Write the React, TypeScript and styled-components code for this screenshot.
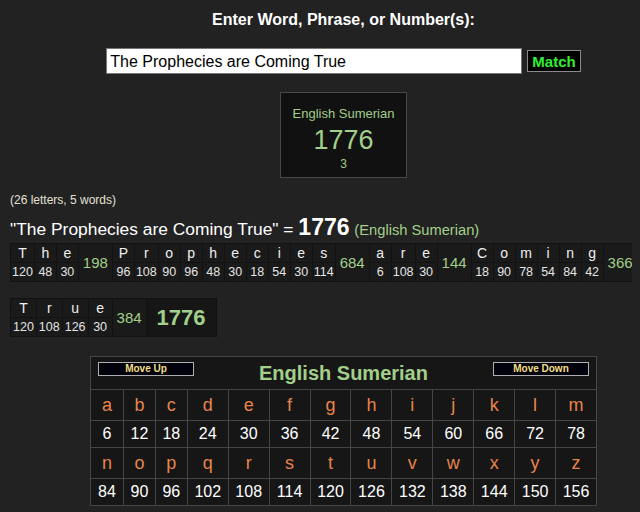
import React from 'react';
import styled, { createGlobalStyle } from 'styled-components';

const GlobalStyle = createGlobalStyle`
html, body {
    margin: 0;
    padding: 0;
    background-color: #222222;
    overflow: hidden;
}
body {
    margin: 8px;
    font-family: "Liberation Sans", Arial, sans-serif;
    color: #eeeeee;
}
`;

const GREEN = '#a2cf8a';

const Page = styled.div`
width: 671px;
display: flex;
flex-direction: column;
`;

const Title = styled.div`
height: 24px;
line-height: 24px;
text-align: center;
font-weight: bold;
font-size: 16px;
color: #ffffff;
`;

const InputRow = styled.div`
margin-top: 16px;
display: flex;
justify-content: center;
align-items: center;
gap: 5px;
`;

const PhraseInput = styled.input`
width: 416px;
height: 26px;
box-sizing: border-box;
border: 1px solid #767676;
background-color: #ffffff;
color: #000000;
font-family: "Liberation Sans", Arial, sans-serif;
font-size: 16px;
padding: 2px 3px 0 3px;
outline: none;
`;

const MatchButton = styled.button`
height: 22px;
box-sizing: border-box;
background-color: #000000;
border: 1px solid #8a8a8a;
color: #33ee33;
font-family: "Liberation Sans", Arial, sans-serif;
font-weight: bold;
font-size: 15px;
padding: 0 4px;
cursor: pointer;
`;

const ScoreBox = styled.div`
margin: 18px auto 0 auto;
width: 127px;
height: 86px;
box-sizing: border-box;
background-color: #111111;
border: 1px solid #484848;
display: flex;
flex-direction: column;
align-items: center;
padding-top: 13px;
color: ${GREEN};
`;

const ScoreName = styled.div`
font-size: 13px;
line-height: 16px;
`;

const ScoreValue = styled.div`
font-size: 27px;
line-height: 30px;
margin-top: 3px;
`;

const ScoreRank = styled.div`
font-size: 12px;
line-height: 15px;
margin-top: 2px;
`;

const Counts = styled.div`
margin-top: 15px;
padding-left: 2px;
font-size: 12px;
line-height: 14px;
color: #e2e0d4;
`;

const Heading = styled.div`
margin-top: 9px;
padding-left: 2px;
height: 22px;
line-height: 22px;
font-size: 17.4px;
color: #ffffff;
white-space: nowrap;
`;

const HeadingTotal = styled.span`
font-weight: bold;
font-size: 23px;
`;

const HeadingCipher = styled.span`
font-size: 14.7px;
color: ${GREEN};
`;

const Breakdown = styled.div<{ $top: number }>`
margin-top: ${props => props.$top}px;
margin-left: 2px;
align-self: flex-start;
display: grid;
grid-template-rows: 18px 18px;
grid-auto-flow: column;
gap: 1px;
padding: 1px;
background-color: #121212;
`;

const LetterCell = styled.div<{ $pad: number }>`
min-width: 19px;
background-color: #1a1a1a;
color: #f0f0f0;
font-size: 14px;
display: flex;
align-items: center;
justify-content: center;
padding: 0 ${props => props.$pad}px;
`;

const NumberCell = styled(LetterCell)`
color: #e4e4e4;
font-size: 12.5px;
`;

const SumCell = styled.div`
grid-row: span 2;
background-color: #1a1a1a;
color: ${GREEN};
font-size: 15px;
display: flex;
align-items: center;
justify-content: center;
padding: 0 4px;
`;

const TotalCell = styled(SumCell)`
background-color: #161616;
font-size: 22px;
font-weight: bold;
padding: 0 10px;
`;

const Cipher = styled.div`
margin: 19px auto 0 auto;
width: 507px;
box-sizing: border-box;
border: 1px solid #454545;
background-color: #161616;
display: grid;
grid-template-columns: repeat(3, 32fr) repeat(10, 41fr);
`;

const CipherHeader = styled.div`
grid-column: 1 / -1;
height: 32px;
box-sizing: border-box;
display: flex;
align-items: flex-start;
justify-content: space-between;
padding: 5px 7px 0 7px;
position: relative;
`;

const CipherTitle = styled.div`
position: absolute;
left: 0;
right: 0;
top: 5px;
text-align: center;
font-size: 20px;
font-weight: bold;
color: ${GREEN};
pointer-events: none;
`;

const MoveButton = styled.button`
width: 96px;
height: 14px;
box-sizing: border-box;
background-color: #02020c;
border: 1px solid #b0b0b0;
color: #f3df86;
font-family: "Liberation Sans", Arial, sans-serif;
font-weight: bold;
font-size: 10px;
line-height: 12px;
padding: 0;
cursor: pointer;
`;

const CipherCell = styled.div<{ $letter?: boolean }>`
height: ${props => props.$letter ? 31 : 27}px;
box-sizing: border-box;
border-top: 1px solid #454545;
border-left: 1px solid #454545;
display: flex;
align-items: center;
justify-content: center;
font-size: ${props => props.$letter ? 18 : 16}px;
color: ${props => props.$letter ? '#e8844c' : '#ffffff'};
&:nth-child(13n + 2) {
    border-left: none;
}
`;

const phrase = 'The Prophecies are Coming True';
const value = (ch: string) => (ch.toLowerCase().charCodeAt(0) - 96) * 6;
const words = phrase.split(' ');
const alphabet = 'abcdefghijklmnopqrstuvwxyz'.split('');

function WordCells({ word, pad }: { word: string, pad: number }) {
    const sum = word.split('').reduce((acc, ch) => acc + value(ch), 0);
    return (
        <>
            {word.split('').map((ch, i) => (
                <React.Fragment key={i}>
                    <LetterCell $pad={pad}>{ch}</LetterCell>
                    <NumberCell $pad={pad}>{value(ch)}</NumberCell>
                </React.Fragment>
            ))}
            <SumCell>{sum}</SumCell>
        </>
    );
}

export default function App() {
    const total = words.reduce((acc, w) => acc + w.split('').reduce((a, ch) => a + value(ch), 0), 0);
    const rows = [alphabet.slice(0, 13), alphabet.slice(13)];

    return (
        <Page>
            <GlobalStyle />
            <Title>Enter Word, Phrase, or Number(s):</Title>
            <InputRow>
                <PhraseInput defaultValue={phrase} />
                <MatchButton>Match</MatchButton>
            </InputRow>
            <ScoreBox>
                <ScoreName>English Sumerian</ScoreName>
                <ScoreValue>{total}</ScoreValue>
                <ScoreRank>3</ScoreRank>
            </ScoreBox>
            <Counts>(26 letters, 5 words)</Counts>
            <Heading>
                "{phrase}" = <HeadingTotal>{total}</HeadingTotal> <HeadingCipher>(English Sumerian)</HeadingCipher>
            </Heading>
            <Breakdown $top={5}>
                {words.slice(0, 4).map((w, i) => <WordCells key={i} word={w} pad={1} />)}
            </Breakdown>
            <Breakdown $top={16}>
                <WordCells word={words[4]} pad={2} />
                <TotalCell>{total}</TotalCell>
            </Breakdown>
            <Cipher>
                <CipherHeader>
                    <MoveButton>Move Up</MoveButton>
                    <CipherTitle>English Sumerian</CipherTitle>
                    <MoveButton>Move Down</MoveButton>
                </CipherHeader>
                {rows.map((row, r) => (
                    <React.Fragment key={r}>
                        {row.map(ch => <CipherCell key={'l' + ch} $letter>{ch}</CipherCell>)}
                        {row.map(ch => <CipherCell key={'n' + ch}>{value(ch)}</CipherCell>)}
                    </React.Fragment>
                ))}
            </Cipher>
        </Page>
    );
}
